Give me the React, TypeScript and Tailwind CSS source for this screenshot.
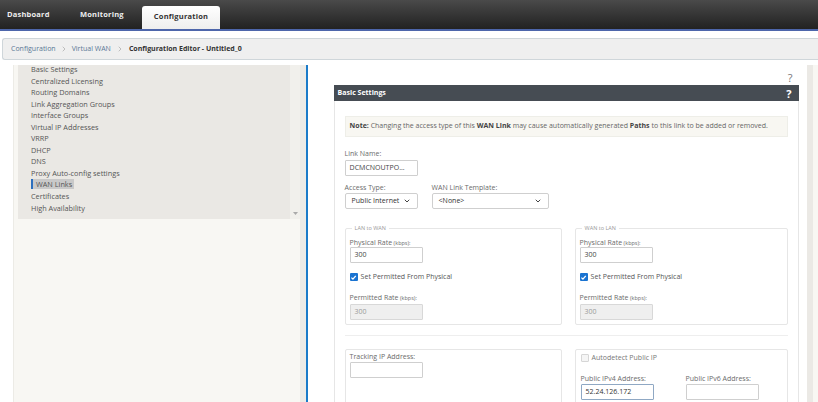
import { ChevronDown, ChevronRight } from 'lucide-react'

const menuItems = [
  'Basic Settings',
  'Centralized Licensing',
  'Routing Domains',
  'Link Aggregation Groups',
  'Interface Groups',
  'Virtual IP Addresses',
  'VRRP',
  'DHCP',
  'DNS',
  'Proxy Auto-config settings',
  'WAN Links',
  'Certificates',
  'High Availability',
]

function Label({ text, unit }: { text: string; unit?: string }) {
  return (
    <div className="h-[9px] leading-[9px] text-[7px] text-[#6b6b6b] whitespace-nowrap">
      {text}
      {unit && <span className="text-[5.5px]"> ({unit}):</span>}
    </div>
  )
}

function TextBox({ value = '', disabled = false, focused = false, mt = 'mt-0' }: { value?: string; disabled?: boolean; focused?: boolean; mt?: string }) {
  return (
    <div
      className={`w-[73px] h-[16px] ${mt} border rounded-[1px] px-[4px] flex items-center text-[7px] ${
        disabled ? 'bg-[#efefef] border-[#d8d8d8] text-[#9a9a9a]' : focused ? 'bg-white border-[#8fa8c4] text-[#333]' : 'bg-white border-[#cfcfcf] text-[#444]'
      }`}
    >
      {value}
    </div>
  )
}

function Select({ value, width }: { value: string; width: string }) {
  return (
    <div className={`${width} h-[16px] mt-[1px] border border-[#cfcfcf] rounded-[2px] bg-white pl-[6px] pr-[6px] flex items-center justify-between text-[7px] text-[#333]`}>
      <span>{value}</span>
      <ChevronDown size={8} strokeWidth={3} className="text-[#444]" />
    </div>
  )
}

function CheckRow({ label, checked }: { label: string; checked: boolean }) {
  return (
    <div className="flex items-center gap-[3px] h-[10px]">
      {checked ? (
        <span className="w-[8px] h-[8px] rounded-[1px] bg-[#1a73d1] flex items-center justify-center">
          <svg width="7" height="7" viewBox="0 0 10 10">
            <path d="M2 5.2 L4.2 7.4 L8.2 2.6" fill="none" stroke="white" strokeWidth="1.8" />
          </svg>
        </span>
      ) : (
        <span className="w-[8px] h-[8px] rounded-[1px] border border-[#d6d6d6] bg-[#f5f5f5]" />
      )}
      <span className={`text-[7px] ${checked ? 'text-[#555]' : 'text-[#777]'}`}>{label}</span>
    </div>
  )
}

function RateBox({ legend, left }: { legend: string; left: boolean }) {
  return (
    <div className={`relative border border-[#e6e6e6] rounded-[2px] h-[97px] pl-[4px] pt-[9px] ${left ? 'w-[217px]' : 'w-[213px]'}`}>
      <span className="absolute -top-[4px] left-[6px] bg-white px-[3px] text-[5.5px] leading-[7px] text-[#999]">{legend}</span>
      <Label text="Physical Rate" unit="kbps" />
      <TextBox value="300" />
      <div className="mt-[9px]">
        <CheckRow label="Set Permitted From Physical" checked />
      </div>
      <div className="mt-[11px]">
        <Label text="Permitted Rate" unit="kbps" />
      </div>
      <TextBox value="300" disabled mt="mt-[2px]" />
    </div>
  )
}

export default function App() {
  return (
    <div className="w-[818px] h-[402px] overflow-hidden bg-white font-['Open_Sans','Liberation_Sans',sans-serif] flex flex-col">
      {/* Top nav */}
      <div className="h-[31px] shrink-0 bg-gradient-to-b from-[#4a4a4a] to-[#222222] border-b-2 border-[#4d66ab] flex items-end">
        <div className="w-[80px] h-[29px] flex items-center pl-[7px] text-[7.5px] font-bold text-[#eeeeee] tracking-[0.2px]">Dashboard</div>
        <div className="w-[62px] h-[29px] flex items-center text-[7.5px] font-bold text-[#eeeeee] tracking-[0.2px]">Monitoring</div>
        <div className="w-[78px] h-[23px] rounded-t-[3px] bg-gradient-to-b from-[#ffffff] to-[#eeeeee] flex items-center justify-center pb-[2px] text-[7.5px] font-bold text-[#333] tracking-[0.2px]">
          Configuration
        </div>
      </div>

      <div className="h-[7px] shrink-0" />

      {/* Breadcrumb */}
      <div className="h-[22px] shrink-0 ml-[2px] border border-r-0 border-[#cfd6da] rounded-l-[3px] bg-[#efefef] flex items-center pl-[8px] text-[7px]">
        <span className="text-[#5a7896]">Configuration</span>
        <ChevronRight size={8} strokeWidth={1.5} className="text-[#8a8a8a] mx-[4px]" />
        <span className="text-[#5a7896]">Virtual WAN</span>
        <ChevronRight size={8} strokeWidth={1.5} className="text-[#8a8a8a] mx-[5px]" />
        <span className="font-bold text-[#333]">Configuration Editor - Untitled_0</span>
      </div>

      {/* Body */}
      <div className="flex-1 flex pt-[5px] min-h-0">
        {/* Left tree */}
        <div className="ml-[13px] w-[287px] bg-[#f8f7f3] flex border-l border-[#ecebe6]">
          <div className="ml-[4px] w-[272px] h-[154px] bg-[#eae8e4] overflow-hidden">
            <div className="-mt-[1px] pl-[13px]">
              {menuItems.map(item => (
                <div key={item} className="h-[11.55px] leading-[11.55px] text-[7.3px] text-[#555] whitespace-nowrap">
                  {item === 'WAN Links' ? (
                    <span className="inline-block bg-[#c9c9c9] border-l-2 border-[#2c6fbe] pl-[3px] pr-[2px] leading-[10px]">{item}</span>
                  ) : (
                    item
                  )}
                </div>
              ))}
            </div>
          </div>
          <div className="w-[10px] h-[154px] bg-[#f1f0ec] flex items-end justify-center pb-[4px]">
            <svg width="5" height="3" viewBox="0 0 5 3">
              <path d="M0 0 L5 0 L2.5 3 Z" fill="#aaa" />
            </svg>
          </div>
        </div>
        <div className="w-[6px] bg-[#ecebe7]" />
        <div className="w-[2px] bg-[#1b7bc9]" />

        {/* Main */}
        <div className="flex-1 flex flex-col">
          <div className="h-[20px] shrink-0 flex items-end justify-end pr-[14px] pb-[2px] text-[11px] leading-[11px] text-[#777]">?</div>
          <div className="ml-[26px] mr-[8px] flex flex-col flex-1">
            <div className="h-[16px] shrink-0 bg-[#464c53] flex items-center justify-between pl-[4px] pr-[7px]">
              <span className="text-[7px] font-bold text-white">Basic Settings</span>
              <span className="text-[11px] font-bold text-white leading-[11px]">?</span>
            </div>
            <div className="flex-1 border-x border-[#e6e6e6] px-[10px] pt-[15px]">
              <div className="h-[21px] bg-[#f8f7f2] border border-[#eeeee8] px-[4px] flex items-center text-[7px] text-[#666] whitespace-nowrap">
                <span className="font-bold text-[#444]">Note:</span>&nbsp;Changing the access type of this&nbsp;<span className="font-bold text-[#444]">WAN Link</span>&nbsp;may cause automatically generated&nbsp;<span className="font-bold text-[#444]">Paths</span>&nbsp;to this link to be added or removed.
              </div>

              <div className="mt-[12px]">
                <Label text="Link Name:" />
                <TextBox value="DCMCNOUTPO..." mt="mt-[2px]" />
              </div>

              <div className="mt-[7px] flex gap-[14px]">
                <div>
                  <Label text="Access Type:" />
                  <Select value="Public Internet" width="w-[73px]" />
                </div>
                <div>
                  <Label text="WAN Link Template:" />
                  <Select value="<None>" width="w-[117px]" />
                </div>
              </div>

              <div className="mt-[19px] flex gap-[13px]">
                <RateBox legend="LAN to WAN" left />
                <RateBox legend="WAN to LAN" left={false} />
              </div>

              <div className="mt-[10px] h-px bg-[#eeeeee]" />

              <div className="mt-[13px] flex gap-[13px]">
                <div className="w-[217px] h-[70px] border border-[#e6e6e6] rounded-[2px] pl-[4px] pt-[2px]">
                  <Label text="Tracking IP Address:" />
                  <TextBox mt="mt-[1px]" />
                </div>
                <div className="w-[213px] h-[70px] border border-[#e6e6e6] rounded-[2px] pl-[5px] pt-[3px]">
                  <CheckRow label="Autodetect Public IP" checked={false} />
                  <div className="mt-[11px] flex gap-[32px]">
                    <div>
                      <Label text="Public IPv4 Address:" />
                      <TextBox value="52.24.126.172" focused mt="mt-[1px]" />
                    </div>
                    <div>
                      <Label text="Public IPv6 Address:" />
                      <TextBox mt="mt-[1px]" />
                    </div>
                  </div>
                </div>
              </div>
            </div>
          </div>
        </div>

        {/* Right scroll strip */}
        <div className="w-[7px] bg-[#ebe9e5]" />
        <div className="w-[5px] bg-[#f8f7f3]" />
      </div>
    </div>
  )
}
